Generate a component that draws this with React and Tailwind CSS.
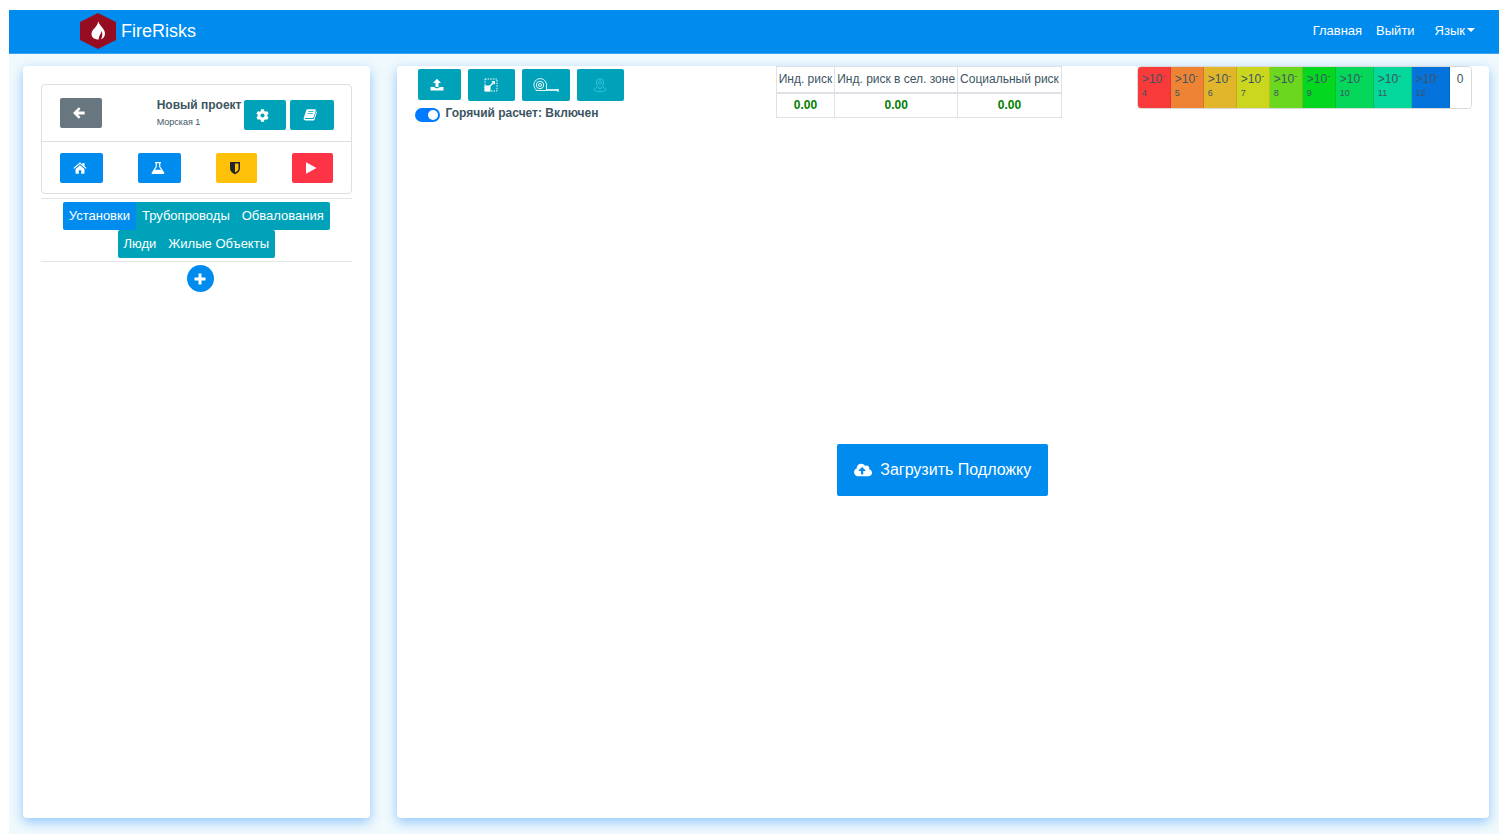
import { useState } from 'react'
import { FaCog, FaCloudUploadAlt } from 'react-icons/fa'

const tabs = ['Установки', 'Трубопроводы', 'Обвалования', 'Люди', 'Жилые Объекты']

const risks = [
  { title: 'Инд. риск', value: '0.00' },
  { title: 'Инд. риск в сел. зоне', value: '0.00' },
  { title: 'Социальный риск', value: '0.00' },
]

const levels = [
  { power: 4, color: 'bg-[#f93a3a]' },
  { power: 5, color: 'bg-[#ee8433]' },
  { power: 6, color: 'bg-[#e2b62b]' },
  { power: 7, color: 'bg-[#cbd71f]' },
  { power: 8, color: 'bg-[#6cd71f]' },
  { power: 9, color: 'bg-[#04d71f]' },
  { power: 10, color: 'bg-[#04d75a]' },
  { power: 11, color: 'bg-[#04d79c]' },
  { power: 12, color: 'bg-[#0473dc]' },
]

function Logo() {
  return (
    <svg viewBox="0 0 36 36" className="h-9 w-9" aria-hidden="true">
      <path d="M18 0 36 9v18l-18 9L0 27V9z" fill="#960d22" />
      <path
        d="M18.200 8c.6 4.300 6.800 7.200 6.800 12.800 0 2.600-1.600 4.600-4 5.500 1.600-2.600 1.700-5.600.6-8.300-.5 3.200-3 4.500-2.800 8.500-4.200.1-7.300-2-7.300-5.500C11.500 16 18 14 18.200 8z"
        fill="#fff"
      />
    </svg>
  )
}

function Icon({ children }) {
  return (
    <svg viewBox="0 0 14 14" className="h-3.5 w-3.5" fill="currentColor" fillRule="evenodd" aria-hidden="true">
      {children}
    </svg>
  )
}

function ArrowIcon() {
  return (
    <Icon>
      <path d="M1 7 6.800 1.200l1.700 1.700L6 5.600h6.700v2.800H6l2.500 2.700-1.700 1.700z" />
    </Icon>
  )
}

function HomeIcon() {
  return (
    <Icon>
      <path d="M7 4.200 11.500 8v4.200c0 .3-.2.500-.5.500H8.200V9.200H5.800v3.500H3c-.3 0-.5-.2-.5-.500V8z" />
      <path d="M7 1.300 9.500 3.400V2h2v3.100l2.100 1.800-.8.900L7 3 1.200 7.800l-.8-.9z" />
    </Icon>
  )
}

function PlayIcon() {
  return (
    <Icon>
      <path d="M2 1.300 12.500 7 2 12.700z" />
    </Icon>
  )
}

function PlusIcon() {
  return (
    <Icon>
      <path d="M5.500 1.500h3v4h4v3h-4v4h-3v-4h-4v-3h4z" />
    </Icon>
  )
}

function FlaskIcon() {
  return (
    <Icon>
      <path d="M4 1h6v1.200H9.300v3.300l3.900 6c.5.800.1 1.500-.8 1.500H1.600c-.9 0-1.300-.7-.8-1.500l3.900-6V2.200H4zM5.900 2.200v3.600L4 8.800h6L8.100 5.800V2.200z" />
    </Icon>
  )
}

function ShieldIcon() {
  return (
    <Icon>
      <path d="M2 1h10v6.500c0 2.700-2.300 4.500-5 5.800-2.700-1.300-5-3.100-5-5.800zM7 2.600v8.900c2-1.100 3.500-2.400 3.500-4V2.600z" />
    </Icon>
  )
}

function BookIcon() {
  return (
    <Icon>
      <path d="M4.800 1.300h7c.8 0 1.200.6 1 1.300L10.700 9c-.2.600-.7.900-1.300.9H2.300c-.4 0-.6.2-.5.600.1.500.5.600 1 .6h7.200c.5 0 .9-.3 1-.7l2.200-7.200c.6.300.7.900.5 1.500l-2 6.600c-.2.800-.9 1.300-1.700 1.300H2.800C1.400 12.600.4 11.500.6 10.300L3.200 2.500c.2-.7.800-1.200 1.600-1.200zM5.500 3.300l-.2.700h5l.2-.7zM4.900 5.300l-.2.700h5l.2-.7z" />
    </Icon>
  )
}

function UploadIcon() {
  return (
    <Icon>
      <path d="M7 .8 11 5H8.500v4h-3V5H3z" />
      <path d="M.5 9h4c.2.800.8 1.200 1.500 1.200h2c.7 0 1.300-.4 1.500-1.200h4v3.500H.5z" />
    </Icon>
  )
}

function ScaleIcon() {
  return (
    <svg viewBox="0 0 14 14" className="h-3.5 w-3.5" fill="none" stroke="currentColor" aria-hidden="true">
      <rect x="1" y="1" width="12" height="12" strokeDasharray="1.500 1.100" />
      <path d="M.5 7.500h6v6h-6z" fill="currentColor" stroke="none" />
      <path d="m6 8 4-4" strokeWidth="1.400" />
      <path d="M7.300 3h3.700v3.700z" fill="currentColor" stroke="none" />
    </svg>
  )
}

function TapeIcon() {
  return (
    <svg viewBox="0 0 26 14" className="h-3.5 w-6.5" fill="none" stroke="currentColor" aria-hidden="true">
      <path d="M3 12.500h10.500V7A6.300 6.300 0 1 0 3 11.600z" strokeWidth=".9" />
      <circle cx="7" cy="7" r="3.700" strokeWidth=".9" />
      <circle cx="7" cy="7" r="1.500" strokeWidth=".9" />
      <path d="M13.500 12H25.500" strokeWidth="1.600" />
      <path d="M25 11v3" />
    </svg>
  )
}

function PinIcon() {
  return (
    <svg viewBox="0 0 14 14" className="h-3.5 w-3.5" fill="none" stroke="currentColor" aria-hidden="true">
      <path d="M7 11.500C5.800 9.300 3.300 7.500 3.300 4.500a3.700 3.700 0 0 1 7.400 0c0 3-2.500 4.800-3.700 7z" />
      <circle cx="7" cy="4.500" r="1.600" />
      <path d="M4 9.700c-2 .4-3.300 1-3.300 1.800C.7 12.700 3.500 13.500 7 13.500s6.300-.8 6.300-2c0-.8-1.300-1.400-3.300-1.800" />
    </svg>
  )
}

function IconButton({ label, className, children, ...rest }) {
  return (
    <button type="button" aria-label={label} className={`flex items-center justify-center rounded-xs ${className}`} {...rest}>
      {children}
    </button>
  )
}

function Navbar() {
  return (
    <nav className="flex h-11 items-center justify-between border-b border-[#3ba4f3] bg-[#008cef] pr-6 pb-0.5 pl-[71px] text-white">
      <a href="#" className="flex items-center gap-[5px] text-lg">
        <Logo />
        FireRisks
      </a>
      <div className="flex items-center text-[13px]">
        <a href="#" className="mr-3.5">Главная</a>
        <a href="#" className="mr-5">Выйти</a>
        <button type="button" className="flex items-center gap-0.5">
          Язык
          <span className="mb-0.5 border-x-4 border-t-4 border-x-transparent border-t-white" />
        </button>
      </div>
    </nav>
  )
}

function Sidebar() {
  const [active, setActive] = useState('Установки')

  return (
    <aside className="flex-1 rounded bg-white p-[18px] shadow-[0_4px_12px_rgba(0,123,255,0.4)]">
      <div className="rounded border border-[#dfdfdf]">
        <div className="flex h-[57px] items-center border-b border-[#dfdfdf] pr-[17px] pl-[18px]">
          <IconButton label="Назад" className="h-[30px] w-[42px] bg-[#68767f] pr-1 text-white">
            <ArrowIcon />
          </IconButton>
          <div className="ml-auto flex items-center gap-0.5">
            <div className="whitespace-nowrap">
              <h1 className="text-xs leading-[18px] font-bold">Новый проект</h1>
              <p className="text-[9px] leading-4">Морская 1</p>
            </div>
            <div className="mt-1 flex gap-1">
              <IconButton label="Настройки" className="h-[30px] w-[42px] bg-[#00a2b9] pr-1 text-[13px] text-white">
                <FaCog />
              </IconButton>
              <IconButton label="Справочник" className="h-[30px] w-11 bg-[#00a2b9] pr-1 text-white">
                <BookIcon />
              </IconButton>
            </div>
          </div>
        </div>
        <div className="flex h-[51px] items-center justify-between pr-[17px] pl-[18px]">
          <IconButton label="Главная" className="h-[30px] w-[43px] bg-[#008cef] pr-1 text-white">
            <HomeIcon />
          </IconButton>
          <IconButton label="Вещества" className="h-[30px] w-[43px] bg-[#008cef] pr-1 text-white">
            <FlaskIcon />
          </IconButton>
          <IconButton label="Защита" className="h-[30px] w-[41px] bg-[#ffc107] pr-1 text-[#212529]">
            <ShieldIcon />
          </IconButton>
          <IconButton label="Запуск" className="h-[30px] w-[41px] bg-[#ff3346] pr-1 text-white">
            <PlayIcon />
          </IconButton>
        </div>
      </div>

      <div className="mt-1 flex flex-wrap justify-center border-y border-[#e5e5e5] px-4 py-[3px]">
        {tabs.map((tab, i) => (
          <button
            key={tab}
            type="button"
            onClick={() => setActive(tab)}
            className={`h-7 px-1.5 text-[13px] text-white ${active === tab ? 'bg-[#008cef]' : 'bg-[#00a2b9]'} ${i === 0 || i === 3 ? 'rounded-l-xs' : ''} ${i === 2 || i === 4 ? 'rounded-r-xs' : ''}`}
          >
            {tab}
          </button>
        ))}
      </div>

      <div className="mt-[3px] flex justify-center pl-2">
        <button type="button" aria-label="Добавить" className="flex h-[27px] w-[27px] items-center justify-center rounded-full bg-[#008cef] text-white">
          <PlusIcon />
        </button>
      </div>
    </aside>
  )
}

function Toolbar() {
  const [hot, setHot] = useState(true)

  return (
    <div className="px-[18px] pt-[3px]">
      <div className="flex gap-[7px] pl-[3px]">
        <IconButton label="Загрузить" className="h-[31px] w-[43px] bg-[#00a2b9] pr-1 text-white">
          <UploadIcon />
        </IconButton>
        <IconButton label="Масштаб" className="h-8 w-[47px] bg-[#00a2b9] text-white">
          <ScaleIcon />
        </IconButton>
        <IconButton label="Рулетка" className="h-8 w-12 bg-[#00a2b9] text-white">
          <TapeIcon />
        </IconButton>
        <IconButton label="Метка" className="h-8 w-[47px] bg-[#00a2b9] text-[#33c9dc]">
          <PinIcon />
        </IconButton>
      </div>
      <label className="mt-[3px] flex w-fit items-center gap-1.5 text-xs font-bold">
        <input
          type="checkbox"
          role="switch"
          checked={hot}
          onChange={(e) => setHot(e.target.checked)}
          className="mt-1 h-3.5 w-[25px] appearance-none rounded-full bg-[#adb5bd] before:mt-0.5 before:ml-0.5 before:block before:h-2.5 before:w-2.5 before:rounded-full before:bg-white checked:bg-[#007bff] checked:before:ml-[13px]"
        />
        Горячий расчет: {hot ? 'Включен' : 'Выключен'}
      </label>
    </div>
  )
}

function RiskTable() {
  return (
    <table className="border-collapse text-center text-xs whitespace-nowrap">
      <thead>
        <tr>
          {risks.map((risk) => (
            <th key={risk.title} className="h-[26px] border border-b-2 border-[#dee2e6] px-0.5 font-normal">{risk.title}</th>
          ))}
        </tr>
      </thead>
      <tbody>
        <tr>
          {risks.map((risk) => (
            <td key={risk.title} className="h-[25px] border border-[#dee2e6] font-bold text-[#008000]">{risk.value}</td>
          ))}
        </tr>
      </tbody>
    </table>
  )
}

function Legend() {
  return (
    <ul className="flex h-[43px] w-fit overflow-hidden rounded border border-black/15 text-xs">
      {levels.map((level) => (
        <li key={level.power} className={`border-r border-black/10 px-1 pt-1 ${level.power > 9 ? 'w-[38px]' : 'w-[33px]'} ${level.color}`}>
          <span className="block leading-4">&gt;10<sup className="text-[9px]">-</sup></span>
          <span className="block text-[9px] leading-3">{level.power}</span>
        </li>
      ))}
      <li className="bg-white px-[7px] pt-1 leading-4">0</li>
    </ul>
  )
}

function App() {
  return (
    <div className="min-h-screen bg-white pt-2.5 pl-[9px] font-['Liberation_Sans',Arial,sans-serif] text-[#3d5563]">
      <div className="flex min-h-[calc(100vh-10px)] flex-col bg-[#f0f9fc]">
        <Navbar />
        <div className="flex flex-1 pt-3 pb-4">
          <div className="flex w-1/4 pr-3 pl-3.5">
            <Sidebar />
          </div>
          <div className="flex flex-1 pr-2.5 pl-[15px]">
            <main className="flex flex-1 flex-col rounded bg-white shadow-[0_4px_12px_rgba(0,123,255,0.4)]">
              <div className="grid grid-cols-3">
                <Toolbar />
                <div className="pl-[15px]">
                  <RiskTable />
                </div>
                <div className="pl-3">
                  <Legend />
                </div>
              </div>
              <div className="flex flex-1 items-center justify-center">
                <button type="button" className="flex h-[52px] items-center gap-2 rounded-xs bg-[#008cef] px-[17px] text-base text-white">
                  <FaCloudUploadAlt className="text-lg" />
                  Загрузить Подложку
                </button>
              </div>
            </main>
          </div>
        </div>
      </div>
    </div>
  )
}

export default App
